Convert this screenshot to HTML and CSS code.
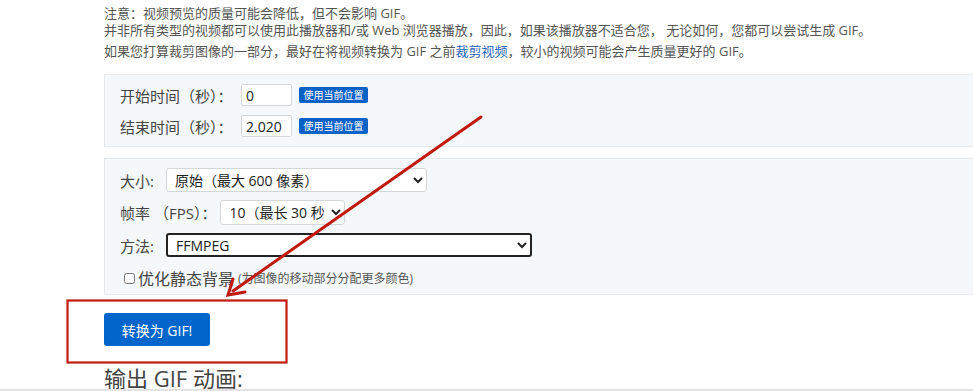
FILE: index.html
```html
<!DOCTYPE html>
<html lang="zh-CN">

<head>
    <meta charset="UTF-8">
    <meta name="viewport" content="width=device-width, initial-scale=1.0">
    <title>视频转 GIF</title>
    <link rel="stylesheet" href="styles.css">
</head>

<body>
    <div class="page">
        <!-- Notes above the form -->
        <p class="note">注意：视频预览的质量可能会降低，但不会影响 GIF。</p>
        <p class="note">并非所有类型的视频都可以使用此播放器和/或 Web 浏览器播放，因此，如果该播放器不适合您， 无论如何，您都可以尝试生成 GIF。</p>
        <p class="note note-crop">如果您打算裁剪图像的一部分，最好在将视频转换为 GIF 之前<a href="#">裁剪视频</a>，较小的视频可能会产生质量更好的 GIF。</p>

        <!-- Start / end time -->
        <div class="panel panel-time">
            <div class="row">
                <label for="start">开始时间（秒）：</label>
                <input type="text" id="start" class="time-input" value="0">
                <button class="pos-btn">使用当前位置</button>
            </div>
            <div class="row">
                <label for="end">结束时间（秒）：</label>
                <input type="text" id="end" class="time-input" value="2.020">
                <button class="pos-btn">使用当前位置</button>
            </div>
        </div>

        <!-- Output options -->
        <div class="panel panel-opts">
            <div class="row">
                <label for="size">大小:</label>
                <select id="size" class="sel sel-size">
                    <option>原始（最大 600 像素）</option>
                </select>
            </div>
            <div class="row">
                <label for="fps">帧率 （FPS）：</label>
                <select id="fps" class="sel sel-fps">
                    <option>10（最长 30 秒）</option>
                </select>
            </div>
            <div class="row">
                <label for="method">方法:</label>
                <select id="method" class="sel sel-method">
                    <option>FFMPEG</option>
                </select>
            </div>
            <div class="row check-row">
                <input type="checkbox" id="optimize">
                <label for="optimize">优化静态背景</label>
                <span class="hint">(为图像的移动部分分配更多颜色)</span>
            </div>
        </div>

        <button class="convert">转换为 GIF!</button>

        <h2 class="output-title">输出 GIF 动画:</h2>
    </div>

    <!-- Red annotation drawn over the page -->
    <svg class="markup" width="973" height="391" viewBox="0 0 973 391">
        <rect x="67.5" y="300.5" width="219" height="62" fill="none" stroke="#c0190d" stroke-width="2.2" />
        <line x1="481" y1="117" x2="233" y2="291" stroke="#c0190d" stroke-width="3" stroke-linecap="round" />
        <polyline points="233,279 228,295 245,292" fill="none" stroke="#c0190d" stroke-width="3" stroke-linecap="round" stroke-linejoin="miter" />
    </svg>

    <div class="scroll-edge"></div>
</body>

</html>
```

FILE: styles.css
```css
body {
    margin: 0;
    font-family: "Open Sans", "Noto Sans CJK SC", sans-serif;
    color: #555;
    background: #fff;
    overflow: hidden;
}

.page {
    padding: 5px 0 0 104px;
    width: 920px;
}

.note {
    margin: 0;
    font-size: 13px;
    line-height: 17px;
    white-space: nowrap;
}

.note-crop {
    margin-top: 4px;
}

.note a {
    color: #1f63b8;
    text-decoration: none;
}

.panel {
    background-color: #f5f8fb;
    border: 1px solid #e6eaee;
    padding: 9px 15px 9px 15px;
    display: flex;
    flex-direction: column;
}

.panel-time {
    margin-top: 14px;
    gap: 9px;
}

.panel-opts {
    margin-top: 11px;
    gap: 8px;
    padding-bottom: 6px;
}

.row {
    display: flex;
    align-items: center;
    font-size: 15px;
    color: #444;
}

.panel-time label {
    width: 121px;
}

.time-input {
    font-family: "Open Sans", sans-serif;
    font-size: 14px;
    color: #222;
    width: 51px;
    height: 22px;
    box-sizing: border-box;
    border: 1px solid #d4d7da;
    border-radius: 2px;
    padding: 0 4px;
    background: #fff;
}

.pos-btn {
    font-family: "Noto Sans CJK SC", sans-serif;
    font-size: 10px;
    line-height: 1;
    color: #fff;
    background-color: #0a62c7;
    border: none;
    border-radius: 2px;
    height: 16px;
    width: 69px;
    padding: 0;
    margin-left: 7px;
}

.sel {
    font-family: "Open Sans", "Noto Sans CJK SC", sans-serif;
    font-size: 14px;
    color: #222;
    background: #fff;
    height: 24px;
    border: 1px solid #d4d7da;
    border-radius: 3px;
    padding: 0 4px;
}

.sel-size {
    width: 261px;
    margin-left: 12px;
}

.sel-fps {
    width: 125px;
    height: 25px;
    margin-left: 4px;
}

.sel-method {
    width: 366px;
    margin-left: 12px;
    border: 2px solid #222;
}

.check-row {
    height: 20px;
    margin-top: 3px;
    font-size: 16px;
}

.check-row input {
    width: 11px;
    height: 11px;
    margin: 0 3px 0 4px;
}

.hint {
    font-size: 12px;
    margin-left: 4px;
    color: #555;
}

.convert {
    font-family: "Open Sans", "Noto Sans CJK SC", sans-serif;
    font-size: 14px;
    color: #fff;
    background-color: #0066cc;
    border: none;
    border-radius: 3px;
    width: 106px;
    height: 33px;
    margin-top: 18px;
    display: block;
}

.output-title {
    font-family: "Open Sans", "Noto Sans CJK SC", sans-serif;
    font-weight: normal;
    font-size: 22px;
    color: #444;
    margin: 18px 0 0 0;
    line-height: 28px;
}

/* Annotation layer */
.markup {
    position: absolute;
    top: 0;
    left: 0;
    pointer-events: none;
}

.scroll-edge {
    position: fixed;
    left: 0;
    right: 0;
    bottom: 0;
    height: 2px;
    background: #e3e3e3;
}
```
